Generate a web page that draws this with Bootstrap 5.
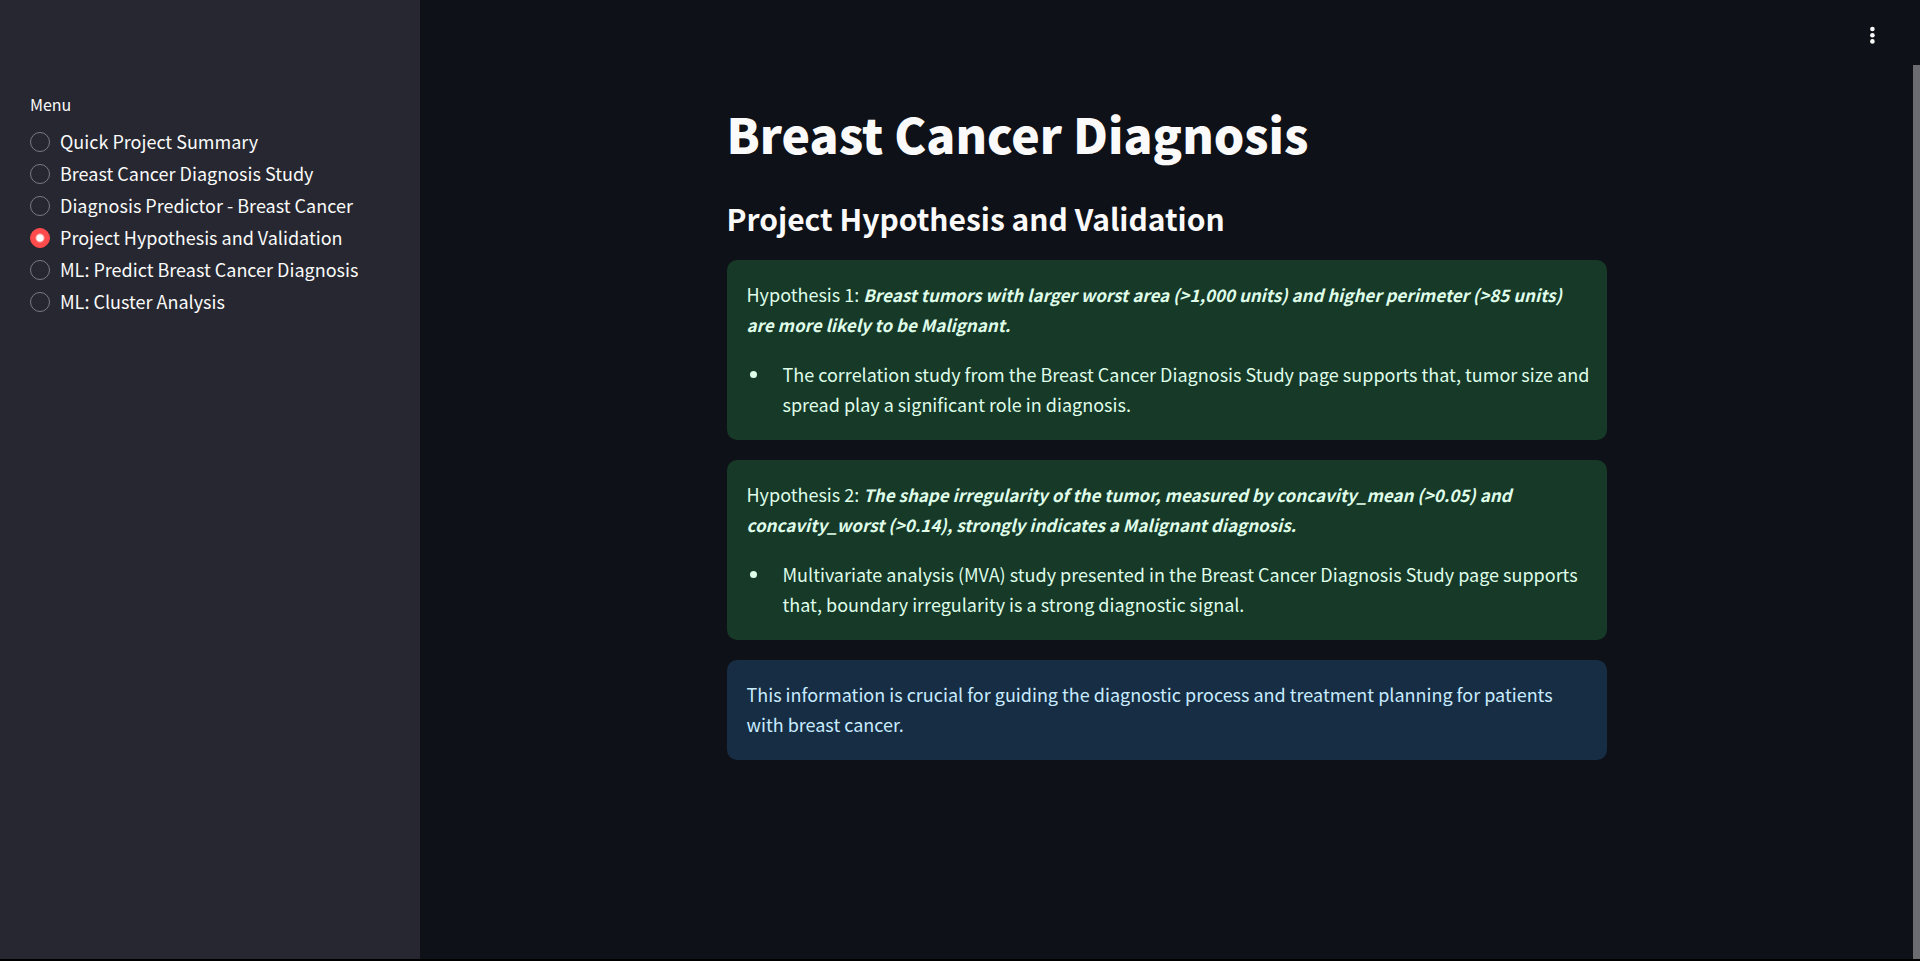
<!DOCTYPE html>
<html lang="en">
<head>
<meta charset="utf-8">
<meta name="viewport" content="width=device-width, initial-scale=1">
<title>Breast Cancer Diagnosis</title>
<link href="https://cdn.jsdelivr.net/npm/bootstrap@5.3.0/dist/css/bootstrap.min.css" rel="stylesheet">
<style>
body { background: #0e1117; color: #fafafa; font-family: "Noto Sans CJK JP", sans-serif; font-size: 18px; line-height: 30px; }
.app-shell { border-bottom: 2px solid #000; }
.app-sidebar { width: 420px; background: #262730; padding: 89px 30px 30px; }
.menu-title { font-size: 16px; line-height: 30px; margin-bottom: 7px; float: none; }
.menu-option { display: flex; align-items: center; gap: 10px; height: 32px; padding: 0; margin: 0; }
.menu-option label { padding-bottom: 2px; }
.menu-option .form-check-input { width: 20px; height: 20px; margin: 0; float: none; flex: none; background-color: #262730; border: 1px solid #7b7c82; }
.menu-option .form-check-input:checked { background-color: #ff4b4b; border-color: #ff4b4b; background-size: 100%; background-image: radial-gradient(circle, #fafafa 3px, transparent 5px); }
.toolbar { height: 65px; padding: 15px 21px 0 0; }
.menu-button { width: 40px; height: 40px; color: #fafafa; }
.page-block { width: 880px; }
.page-title { font-size: 48px; line-height: 66px; font-weight: 900; padding: 35px 0 20px; margin: 0; }
.page-subtitle { font-size: 30px; line-height: 44px; font-weight: 700; padding: 10px 0 20px; margin: 0; }
.notices { row-gap: 20px; }
.notice { border: 0; border-radius: 10px; padding: 19px 20px 21px; margin: 0; }
.notice p { margin-bottom: 20px; }
.notice p:last-child { margin-bottom: 0; }
.notice-success { background: #173928; color: #dffde9; }
.notice-info { background: #172d43; color: #c7ebff; }
.notice ul { padding-left: 24px; margin: 0 -10px 0 0; }
.notice li { padding-left: 12px; }
.claim { font-size: 17px; line-height: 20px; font-weight: 700; font-style: italic; }
.scroll-track { width: 7px; padding-top: 65px; }
.scroll-thumb { background: #6b6c70; }
</style>
</head>
<body>
<div class="app-shell d-flex vh-100 overflow-hidden">
  <aside class="app-sidebar flex-shrink-0">
    <fieldset>
      <legend class="menu-title">Menu</legend>
      <div class="form-check menu-option"><input class="form-check-input" type="radio" name="page" id="p1"><label for="p1">Quick Project Summary</label></div>
      <div class="form-check menu-option"><input class="form-check-input" type="radio" name="page" id="p2"><label for="p2">Breast Cancer Diagnosis Study</label></div>
      <div class="form-check menu-option"><input class="form-check-input" type="radio" name="page" id="p3"><label for="p3">Diagnosis Predictor - Breast Cancer</label></div>
      <div class="form-check menu-option"><input class="form-check-input" type="radio" name="page" id="p4" checked><label for="p4">Project Hypothesis and Validation</label></div>
      <div class="form-check menu-option"><input class="form-check-input" type="radio" name="page" id="p5"><label for="p5">ML: Predict Breast Cancer Diagnosis</label></div>
      <div class="form-check menu-option"><input class="form-check-input" type="radio" name="page" id="p6"><label for="p6">ML: Cluster Analysis</label></div>
    </fieldset>
  </aside>
  <div class="flex-grow-1 d-flex flex-column">
    <header class="toolbar d-flex justify-content-end flex-shrink-0">
      <button type="button" class="btn menu-button p-0 border-0 d-flex justify-content-center align-items-center" aria-label="Main menu">
        <svg width="20" height="20" viewBox="0 0 20 20" fill="currentColor" aria-hidden="true"><circle cx="10.4" cy="4" r="2.3"/><circle cx="10.4" cy="10.2" r="2.3"/><circle cx="10.4" cy="16.4" r="2.3"/></svg>
      </button>
    </header>
    <main class="page-block mw-100 mx-auto">
      <h1 class="page-title">Breast Cancer Diagnosis</h1>
      <h2 class="page-subtitle">Project Hypothesis and Validation</h2>
      <div class="notices d-grid">
        <section class="alert notice notice-success">
          <p>Hypothesis 1: <em class="claim">Breast tumors with larger worst area (&gt;1,000 units) and higher perimeter (&gt;85 units) are more likely to be Malignant.</em></p>
          <ul><li>The correlation study from the Breast Cancer Diagnosis Study page supports that, tumor size and spread play a significant role in diagnosis.</li></ul>
        </section>
        <section class="alert notice notice-success">
          <p>Hypothesis 2: <em class="claim">The shape irregularity of the tumor, measured by concavity_mean (&gt;0.05) and concavity_worst (&gt;0.14), strongly indicates a Malignant diagnosis.</em></p>
          <ul><li>Multivariate analysis (MVA) study presented in the Breast Cancer Diagnosis Study page supports that, boundary irregularity is a strong diagnostic signal.</li></ul>
        </section>
        <section class="alert notice notice-info">
          <p>This information is crucial for guiding the diagnostic process and treatment planning for patients with breast cancer.</p>
        </section>
      </div>
    </main>
  </div>
  <div class="scroll-track d-flex flex-shrink-0" aria-hidden="true"><div class="scroll-thumb w-100"></div></div>
</div>
<script src="https://cdn.jsdelivr.net/npm/bootstrap@5.3.0/dist/js/bootstrap.bundle.min.js"></script>
</body>
</html>
